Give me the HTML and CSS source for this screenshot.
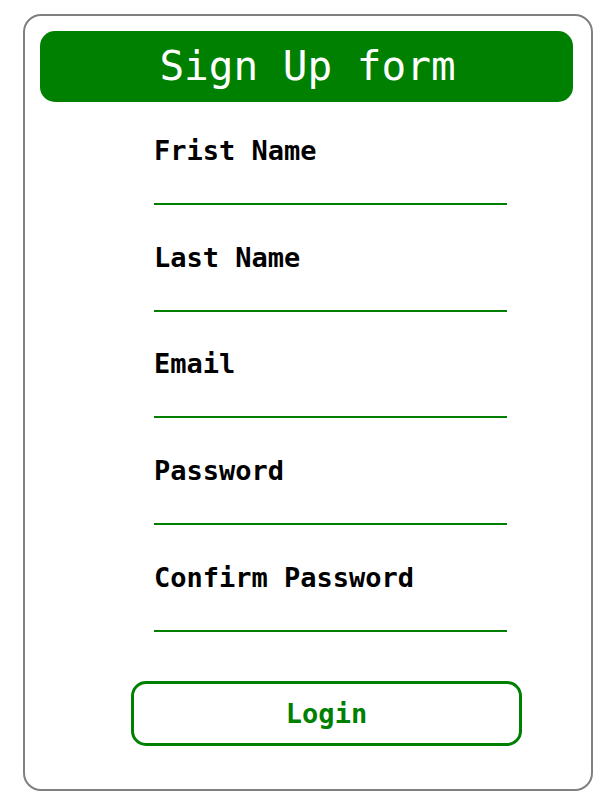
FILE: index.html
```html
<!DOCTYPE html>
<html>
<head>
<meta charset="utf-8">
<link rel="stylesheet" href="styles.css">
</head>
<body>
<div class="card">
  <h1 class="title">Sign Up form</h1>
  <form class="form">
    <div class="fields">
      <div class="field"><label class="label">Frist Name</label><input class="input" type="text"></div>
      <div class="field"><label class="label">Last Name</label><input class="input" type="text"></div>
      <div class="field"><label class="label">Email</label><input class="input" type="email"></div>
      <div class="field"><label class="label">Password</label><input class="input" type="password"></div>
      <div class="field"><label class="label">Confirm Password</label><input class="input" type="password"></div>
    </div>
    <button class="btn" type="button">Login</button>
  </form>
</div>
</body>
</html>
```
FILE: styles.css
```css
* { box-sizing: border-box; }
body {
  margin: 0;
  background: #fff;
  font-family: "DejaVu Sans Mono", "Liberation Mono", monospace;
}
.card {
  width: 570px;
  margin: 14px auto 0;
  border: 2px solid #808080;
  border-radius: 18px;
  padding: 15px 18px 43px 15px;
}
.title {
  margin: 0;
  height: 71px;
  background: #008000;
  color: #fff;
  border-radius: 15px;
  font-size: 41px;
  font-weight: normal;
  line-height: 71px;
  text-align: center;
  padding-left: 2px;
}
.form {
  display: flex;
  flex-direction: column;
  padding-top: 33px;
}
.fields {
  display: flex;
  flex-direction: column;
  gap: 36.7px;
  padding-left: 114px;
}
.field {
  display: flex;
  flex-direction: column;
  width: 353px;
}
.label {
  font-size: 27px;
  font-weight: bold;
  line-height: 32px;
  color: #000;
}
.input {
  height: 38px;
  border: none;
  border-bottom: 2px solid #008000;
  outline: none;
  background: transparent;
  padding: 0;
}
.btn {
  margin: 49px 0 0 91px;
  width: 391px;
  height: 65px;
  border: 3px solid #008000;
  border-radius: 15px;
  background: #fff;
  color: #008000;
  font-family: "DejaVu Sans Mono", "Liberation Mono", monospace;
  font-size: 27px;
  font-weight: bold;
}
```
